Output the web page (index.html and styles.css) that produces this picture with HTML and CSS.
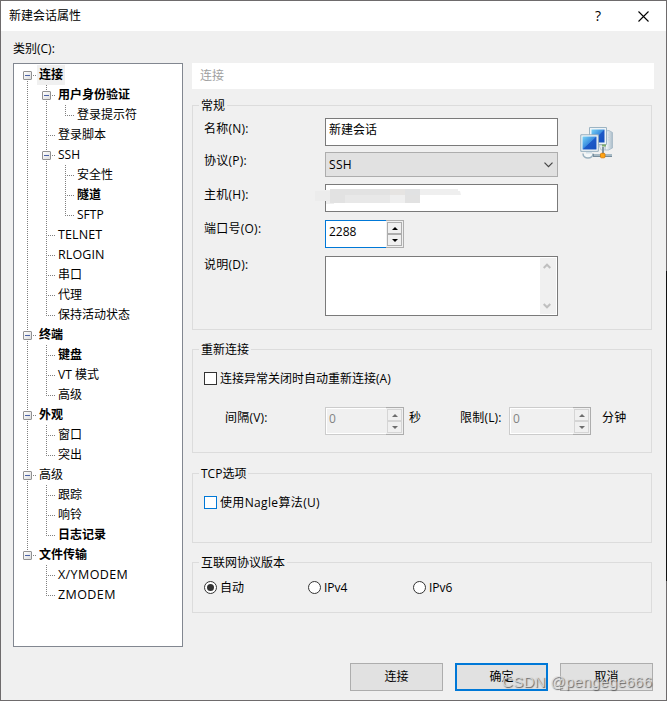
FILE: index.html
```html
<!DOCTYPE html>
<html lang="zh-CN">
<head>
<meta charset="utf-8">
<title>新建会话属性</title>
<link rel="stylesheet" href="styles.css">
</head>
<body>
<div class="window">
  <header class="titlebar">
    <span class="title">新建会话属性</span>
    <span class="help">?</span>
    <svg class="close" width="11" height="11" viewBox="0 0 11 11"><path d="M.5.5l10 10M10.5.5l-10 10" stroke="#000" stroke-width="1.1"/></svg>
  </header>
  <main class="content">
    <section class="sidebar">
      <div class="caption">类别(C):</div>
      <ul class="tree">
        <li class="open"><b class="selected">连接</b>
          <ul>
            <li class="open"><b>用户身份验证</b>
              <ul><li><span>登录提示符</span></li></ul>
            </li>
            <li><span>登录脚本</span></li>
            <li class="open"><span>SSH</span>
              <ul>
                <li><span>安全性</span></li>
                <li><b>隧道</b></li>
                <li><span>SFTP</span></li>
              </ul>
            </li>
            <li><span class="caps">TELNET</span></li>
            <li><span class="caps">RLOGIN</span></li>
            <li><span>串口</span></li>
            <li><span>代理</span></li>
            <li><span>保持活动状态</span></li>
          </ul>
        </li>
        <li class="open"><b>终端</b>
          <ul>
            <li><b>键盘</b></li>
            <li><span class="mixed">VT 模式</span></li>
            <li><span>高级</span></li>
          </ul>
        </li>
        <li class="open"><b>外观</b>
          <ul>
            <li><span>窗口</span></li>
            <li><span>突出</span></li>
          </ul>
        </li>
        <li class="open"><span>高级</span>
          <ul>
            <li><span>跟踪</span></li>
            <li><span>响铃</span></li>
            <li><b>日志记录</b></li>
          </ul>
        </li>
        <li class="open"><b>文件传输</b>
          <ul>
            <li><span class="caps wide-caps">X/YMODEM</span></li>
            <li><span class="caps wide-caps">ZMODEM</span></li>
          </ul>
        </li>
      </ul>
    </section>
    <section class="panel">
      <h1 class="panel-title">连接</h1>
      <fieldset class="general">
        <legend>常规</legend>
        <div class="general-body">
          <div class="form">
            <div class="label">名称(N):</div><div class="field">新建会话</div>
            <div class="label high">协议(P):</div>
            <div class="select">SSH<svg width="9" height="6" viewBox="0 0 9 6"><path d="M.5.7l4 4 4-4" fill="none" stroke="#444" stroke-width="1.2"/></svg></div>
            <div class="label">主机(H):</div><div class="field host"><svg class="mask" width="147" height="16" viewBox="0 0 147 16"><path d="M0 2h5V1h10V0h128v2h2l1 4h-41v8H19v1H11v-3H0z" fill="#efefef"/><path d="M0 2h15v10H0z" fill="#ececec"/><path d="M15 0h75v6H15zM15 6h15v8H15zM90 6h15v8H90z" fill="#e2e2e2"/><path d="M75 0h15v6H75z" fill="#e6e4e2"/><path d="M90 0h15v6H90z" fill="#e1e2e3"/><path d="M30 6h45v8H30z" fill="#e8e8e8"/></svg></div>
            <div class="label high">端口号(O):</div>
            <div class="spinner focus"><span class="value">2288</span><span class="steps"><i class="up"></i><i class="down"></i></span></div>
            <div class="label high">说明(D):</div>
            <div class="textarea"><div class="scroll">
              <svg width="8" height="7" viewBox="0 0 8 7"><path d="M.7 5l3.3-3.3L7.3 5" fill="none" stroke="#bfbfbf" stroke-width="2"/></svg>
              <svg width="8" height="7" viewBox="0 0 8 7"><path d="M.7 2l3.3 3.3L7.3 2" fill="none" stroke="#bfbfbf" stroke-width="2"/></svg>
            </div></div>
          </div>
          <svg class="network" width="33" height="33" viewBox="0 0 33 33">
            <defs>
              <linearGradient id="screen" x1="0" y1="0" x2="1" y2="1"><stop offset="0" stop-color="#79d2f5"/><stop offset=".48" stop-color="#3b8ee0"/><stop offset=".52" stop-color="#1d59c8"/><stop offset="1" stop-color="#1650bd"/></linearGradient>
              <linearGradient id="tower"><stop offset="0" stop-color="#fff"/><stop offset="1" stop-color="#a9bcc9"/></linearGradient>
            </defs>
            <path d="M25 4l4-.5 3.500 2v15.500l-4 2H25z" fill="url(#tower)" stroke="#a5b8c5" stroke-width=".8"/>
            <path d="M28 8h3M28 10.500h3M28 13h3" stroke="#c5d1d9" stroke-width=".7"/>
            <path d="M9.500 .5h17v17h-17z" fill="#eef4f7" stroke="#9db4c3"/>
            <path d="M11.500 2.500h13v13h-13z" fill="url(#screen)"/>
            <path d="M19 18h6v5h-4z" fill="#e9eff2" stroke="#a9bac6" stroke-width=".7"/>
            <path d="M22 17.500h4v2h-4z" fill="#7eac69"/>
            <path d="M.8 7.800h17.500v16.500H.8z" fill="#f5f9fb" stroke="#91aabb"/>
            <path d="M2.500 9.500h14v13h-14z" fill="url(#screen)"/>
            <path d="M6 25h6v3H6z" fill="#d2dfe7"/>
            <path d="M3 26.500c0 6 10 6 10 0" fill="#f4f7f8" stroke="#9ab0be" stroke-width="1.500"/>
            <path d="M13 28.500h19" stroke="#768c9b" stroke-width="3"/><path d="M14 28h18" stroke="#c7d7e0" stroke-width="1.200"/>
            <path d="M23 20v7" stroke="#8496a3" stroke-width="2"/>
            <rect x="20.500" y="26.300" width="4.500" height="4.500" rx="1" fill="#ffa415" stroke="#d77800" stroke-width=".8"/>
          </svg>
        </div>
      </fieldset>
      <fieldset class="reconnect">
        <legend>重新连接</legend>
        <div class="option"><i class="check"></i>连接异常关闭时自动重新连接(A)</div>
        <div class="intervals">
          <span class="interval-label">间隔(V):</span>
          <div class="spinner disabled"><span class="value">0</span><span class="steps"><i class="up"></i><i class="down"></i></span></div>
          <span class="unit">秒</span>
          <span class="limit-label">限制(L):</span>
          <div class="spinner disabled wide"><span class="value">0</span><span class="steps"><i class="up"></i><i class="down"></i></span></div>
          <span class="minutes">分钟</span>
        </div>
      </fieldset>
      <fieldset class="tcp">
        <legend>TCP选项</legend>
        <div class="option"><i class="check hot"></i><span class="nagle">使用Nagle算法(U)</span></div>
      </fieldset>
      <fieldset class="version">
        <legend>互联网协议版本</legend>
        <div class="radios">
          <div class="option"><i class="radio on"></i>自动</div>
          <div class="option"><i class="radio"></i>IPv4</div>
          <div class="option"><i class="radio"></i>IPv6</div>
        </div>
      </fieldset>
    </section>
  </main>
  <footer class="actions">
    <div class="button">连接</div>
    <div class="button primary">确定</div>
    <div class="button">取消</div>
  </footer>
  <div class="watermark">CSDN @pengege666</div>
</div>
</body>
</html>
```
FILE: styles.css
```css
*, *::before, *::after { box-sizing: border-box; }
body {
  margin: 0;
  font: 12px/20px "Open Sans", "Noto Sans CJK SC", sans-serif;
  color: #000;
  background: #f0f0f0;
}
.window {
  position: relative;
  display: flex;
  flex-direction: column;
  width: 667px;
  height: 701px;
  border: 1px solid #6e6b6c;
  background: #f0f0f0;
}
.window::after {
  content: "";
  position: absolute;
  right: -1px;
  top: 270px;
  width: 1px;
  height: 310px;
  background: #111;
}
.titlebar {
  display: flex;
  align-items: center;
  height: 30px;
  padding: 0 17px 0 8px;
  background: #fff;
}
.title { flex: 1; }
.help { font-size: 14px; font-weight: 500; margin-right: 37px; }
.content { display: flex; gap: 9px; padding: 0 12px; height: 616px; }
.sidebar { width: 170px; padding-top: 8px; }
.caption { height: 24px; }
.tree, .tree ul { list-style: none; margin: 0; padding: 0; }
.tree {
  height: 584px;
  padding: 1px 0 0 9px;
  border: 1px solid #828790;
  background: #fff;
}
.tree ul { margin-left: 19px; }
.tree li { position: relative; min-height: 20px; }
.tree li > span, .tree li > b {
  display: table;
  height: 20px;
  margin-left: 14px;
  padding: 0 2px;
  white-space: nowrap;
}
.tree b { font-weight: 700; }
.tree .caps { font-size: 12.5px; letter-spacing: .1px; }
.tree .wide-caps { letter-spacing: .4px; }
.tree .selected { background: #f0f0f0; }
.tree li::before {
  content: "";
  position: absolute;
  left: 4px;
  top: 0;
  width: 9px;
  height: 100%;
  background:
    repeating-linear-gradient(to bottom, #808080 0 1px, transparent 1px 2px) 0 0 / 1px 100% no-repeat,
    repeating-linear-gradient(to right, #808080 0 1px, transparent 1px 2px) 0 10px / 9px 1px no-repeat;
}
.tree li:last-child::before { height: 11px; }
.tree > li:first-child::before {
  top: 10px;
  height: calc(100% - 10px);
  background-position: 0 0, 0 0;
}
.tree .open::after {
  content: "";
  position: absolute;
  left: 0;
  top: 6px;
  width: 9px;
  height: 9px;
  border: 1px solid #919191;
  border-radius: 1px;
  background:
    linear-gradient(#4b63a7, #4b63a7) center / 5px 1px no-repeat,
    linear-gradient(135deg, #fff, #dcdcdc);
}
.panel { width: 462px; padding-top: 32px; }
.panel-title {
  margin: 0 0 8px;
  height: 26px;
  padding: 3px 8px;
  font-size: 12px;
  font-weight: 400;
  color: #a0a0a0;
  background: #fff;
}
fieldset {
  width: 460px;
  min-width: 0;
  margin: 0;
  padding: 0 0 0 11px;
  border: 1px solid #dcdcdc;
}
legend { height: 17px; line-height: 17px; margin-left: -5px; padding: 0 2px; }
.general { height: 233px; }
.reconnect { height: 112px; margin-top: 11px; }
.tcp { height: 78px; margin-top: 12px; }
.version { height: 59px; margin-top: 11px; }
.general-body { display: flex; padding-top: 4px; }
.form {
  display: grid;
  grid-template-columns: 121px 233px;
  grid-template-rows: 34px 32px 36px 36px 60px;
}
.label { padding-top: 1px; letter-spacing: .25px; }
.label.high { padding-top: 0; margin-top: -1px; }
.field { height: 28px; padding: 1px 3px; border: 1px solid #7a7a7a; background: #fff; }
.select {
  display: flex;
  align-items: center;
  justify-content: space-between;
  height: 25px;
  padding: 0 4px 0 3px;
  border: 1px solid #adadad;
  background: #e1e1e1;
  letter-spacing: .3px;
}
.host { position: relative; }
.mask { position: absolute; left: -11px; top: 4px; }
.spinner { display: flex; width: 79px; height: 28px; }
.wide { width: 82px; }
.value {
  flex: 1;
  padding: 1px 3px;
  border: 1px solid #7a7a7a;
  border-right: 0;
  background: #fff;
}
.focus .value { border-color: #0078d7; }
.steps {
  display: flex;
  flex-direction: column;
  width: 18px;
  padding: 1px;
  border: 1px solid #adadad;
  border-left: 0;
}
.steps i {
  display: flex;
  align-items: center;
  justify-content: center;
  flex: 1;
  border: 1px solid #adadad;
}
.steps i::before { content: ""; border: 3px solid transparent; }
.steps .up::before { border-top: 0; border-bottom-color: #000; }
.steps .down::before { border-bottom: 0; border-top-color: #000; }
.disabled .value {
  color: #838383;
  border-color: #ccc;
  background: #f0f0f0;
  box-shadow: inset 1px 1px #fff, inset 0 -1px #fff;
}
.disabled .steps i { border-color: #d5d5d5; }
.disabled .steps .up::before { border-bottom-color: #6d6d6d; }
.disabled .steps .down::before { border-top-color: #6d6d6d; }
.textarea {
  display: flex;
  justify-content: flex-end;
  height: 60px;
  padding: 1px;
  border: 1px solid #7a7a7a;
  background: #fff;
}
.scroll {
  display: flex;
  flex-direction: column;
  align-items: center;
  justify-content: space-between;
  width: 16px;
  padding: 5px 2px 5px 0;
  background: #f0f0f0;
}
.network { margin: 9px 0 0 22px; }
.option { display: flex; align-items: center; gap: 3px; height: 20px; white-space: nowrap; }
.check, .radio { margin-bottom: 1px; }
.check { width: 13px; height: 13px; border: 1px solid #333; background: #fff; }
.check.hot { border-color: #0078d7; }
.nagle { letter-spacing: .35px; }
.reconnect .option { margin-top: 11px; }
.tcp .option { margin-top: 11px; }
.intervals { display: flex; margin-top: 18px; }
.intervals > span { padding-top: 1px; white-space: nowrap; letter-spacing: .2px; }
.interval-label { width: 100px; margin-left: 21px; }
.unit { width: 51px; margin-left: 5px; }
.limit-label { width: 49px; }
.minutes { margin-left: 11px; }
.radios { display: grid; grid-template-columns: 104px 105px 100px; padding-top: 7px; }
.radio {
  display: flex;
  width: 13px;
  height: 13px;
  border: 1px solid #333;
  border-radius: 50%;
  background: #fff;
}
.radio.on::before { content: ""; width: 7px; height: 7px; margin: 2px; border-radius: 50%; background: #333; }
.actions { display: flex; gap: 12px; padding: 16px 0 0 349px; }
.button {
  width: 93px;
  height: 28px;
  border: 1px solid #adadad;
  background: #e1e1e1;
  line-height: 26px;
  text-align: center;
}
.primary { border: 2px solid #0078d7; line-height: 24px; }
.watermark {
  position: absolute;
  left: 501px;
  top: 671px;
  font: 15px/20px "Liberation Sans", sans-serif;
  letter-spacing: .3px;
  color: rgba(225, 225, 225, .8);
  text-shadow: 1px 1px 1px rgba(70, 70, 70, .8);
  white-space: nowrap;
}
```
